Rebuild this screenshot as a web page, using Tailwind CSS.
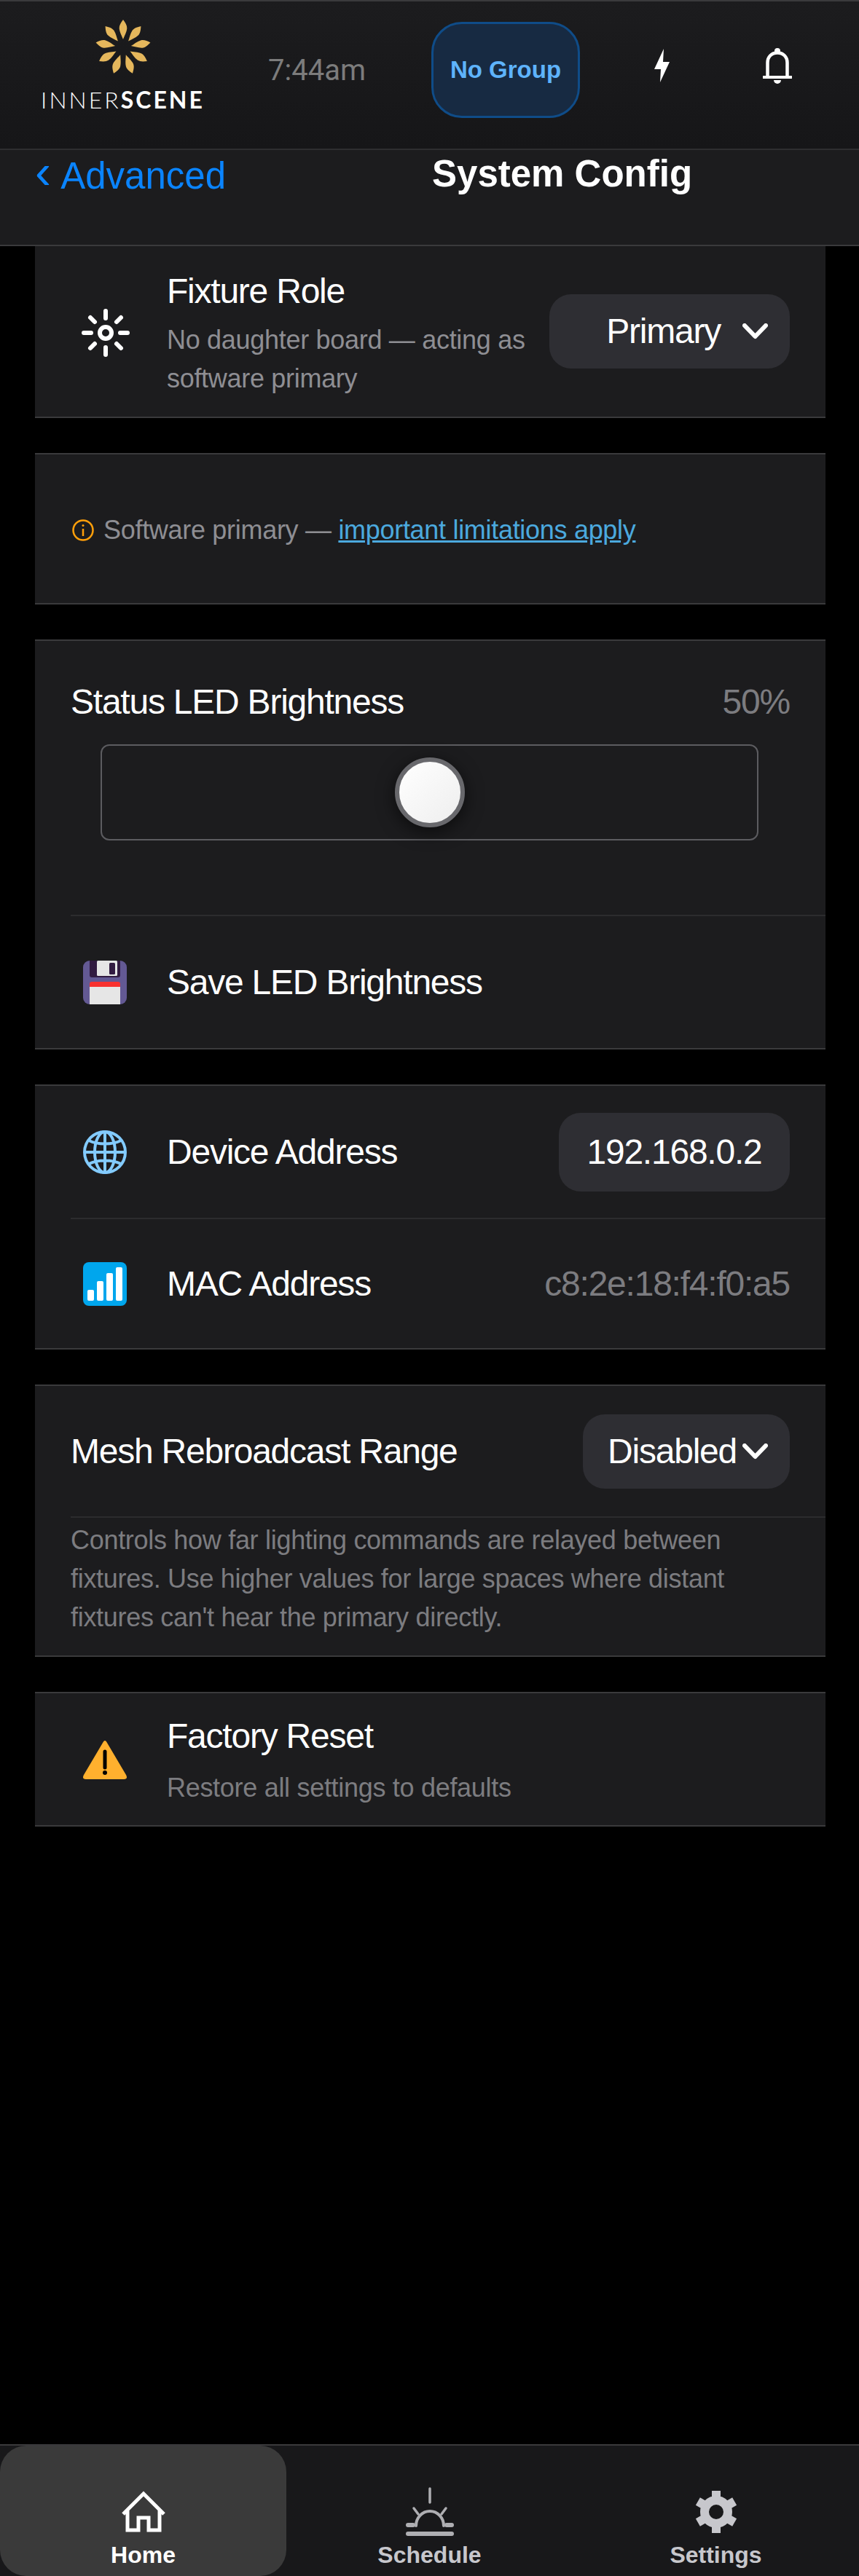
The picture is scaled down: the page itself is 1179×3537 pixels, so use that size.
<!doctype html>
<html lang="en">
<head>
  <meta charset="UTF-8" />
  <script src="https://cdn.jsdelivr.net/npm/@tailwindcss/browser@4"></script>
  <title>System Config</title>
</head>
<body class="h-[3537px] bg-black flex flex-col font-['Liberation_Sans',Arial,sans-serif] text-white overflow-hidden">
  <!-- Top bar -->
  <header class="h-[206px] shrink-0 flex items-start border-t-2 border-b-2 border-t-[#3a3a3c] border-b-[#2e2e30] bg-gradient-to-b from-[#1c1c1e] to-[#161618]">
    <div class="ml-[59px] w-[219px] mt-[25px] flex flex-col items-center">
      <svg class="w-[76px] h-[76px]" viewBox="-38 -38 76 76" fill="#e5b75c">
        <defs><path id="petal" d="M0,-38 C3,-34 5.6,-30 5.3,-26 C4.8,-21 1.5,-15 0,-11 C-1.5,-15 -4.8,-21 -5.3,-26 C-5.6,-30 -3,-34 0,-38Z" /></defs>
        <use href="#petal" />
        <use href="#petal" transform="rotate(40)" />
        <use href="#petal" transform="rotate(80)" />
        <use href="#petal" transform="rotate(120)" />
        <use href="#petal" transform="rotate(160)" />
        <use href="#petal" transform="rotate(200)" />
        <use href="#petal" transform="rotate(240)" />
        <use href="#petal" transform="rotate(280)" />
        <use href="#petal" transform="rotate(320)" />
      </svg>
      <div class="mt-[16px] font-['Lato',sans-serif] text-[32px] leading-[36px] tracking-[3px] whitespace-nowrap"><span class="font-light">INNER</span><span class="font-bold">SCENE</span></div>
    </div>
    <div class="ml-[90px] mt-[72px] w-[134px] font-['Roboto',sans-serif] text-[40px] leading-[46px] text-[#7c7c7c]">7:44am</div>
    <div class="ml-[90px] mt-[28px] w-[204px] h-[132px] flex items-center justify-center rounded-[42px] border-[3px] border-[#0f4c88] bg-[#172a42] text-[33px] font-bold text-[#5eb3fb]">No Group</div>
    <svg class="ml-[102px] mt-[65px] w-[21px] h-[46px]" viewBox="0 0 21 46" fill="#fff"><path d="M13 0 L0 28 L9 28 L8 46 L21 18 L12 18 Z" /></svg>
    <svg class="ml-[128px] mt-[64px] w-[40px] h-[49px]" viewBox="0 0 40 49" fill="none" stroke="#fff">
      <circle cx="20" cy="4" r="4" fill="#fff" stroke="none" />
      <path stroke-width="4.5" d="M6.5 38 V20 C6.5 12 12 6.5 20 6.5 C28 6.5 33.5 12 33.5 20 V38" />
      <path stroke-width="4" d="M1 40 H39" stroke-linecap="round" />
      <path fill="#fff" stroke="none" d="M15 44 H25 A5 5 0 0 1 15 44 Z" />
    </svg>
  </header>

  <!-- Page title bar -->
  <div class="h-[132px] shrink-0 flex items-start bg-[#1c1c1e] border-b-2 border-[#3a3a3c] pt-[4px] text-[51px] leading-[58px]">
    <div class="ml-[48px] -mt-[3px] w-[262px] flex items-baseline text-[#0a84ff]"><span class="text-[66px] leading-[58px] w-[36px]">‹</span><span>Advanced</span></div>
    <h1 class="ml-[283px] font-bold whitespace-nowrap">System Config</h1>
  </div>

  <main class="flex-1 min-h-0 ml-[48px] mr-[46px] flex flex-col gap-[48px]">
    <!-- Fixture role -->
    <section class="h-[236px] shrink-0 bg-[#1c1c1e] border-b-2 border-[#3a3a3c] pl-[64px] pr-[49px] flex items-center">
      <svg class="w-[66px] h-[66px] shrink-0 mt-[4px]" viewBox="0 0 66 66" fill="none" stroke="#fff" stroke-width="6" stroke-linecap="round">
        <circle cx="33" cy="33" r="8" />
        <path d="M33 3 V13 M33 53 V63 M3 33 H13 M53 33 H63 M12 12 L18 18 M54 12 L48 18 M12 54 L18 48 M54 54 L48 48" />
      </svg>
      <div class="ml-[51px] w-[510px] shrink-0 pt-[2px]">
        <div class="text-[48px] tracking-[-1.23px] leading-[68px]">Fixture Role</div>
        <div class="mt-[6px] text-[36px] tracking-[-0.3px] leading-[53px] text-[#8e8e93] whitespace-nowrap">No daughter board — acting as<br />software primary</div>
      </div>
      <div class="ml-auto w-[330px] h-[102px] shrink-0 rounded-[30px] bg-[#2e2e33] flex items-center justify-end pr-[30px] gap-[30px] text-[48px] tracking-[-1.23px]">
        Primary
        <svg class="w-[35px] h-[22px]" viewBox="0 0 35 22" fill="none" stroke="#fff" stroke-width="6" stroke-linecap="round" stroke-linejoin="round"><path d="M3 3 L17.5 18 L32 3" /></svg>
      </div>
    </section>

    <!-- Software primary note -->
    <section class="h-[208px] shrink-0 bg-[#1c1c1e] border-y-2 border-[#3a3a3c] pl-[51px] pt-[4px] flex items-center text-[36px] tracking-[-0.3px] text-[#8e8e93]">
      <svg class="w-[30px] h-[30px] shrink-0 mr-[13px]" viewBox="0 0 30 30" fill="none" stroke="#ff9f0a" stroke-width="2.5">
        <circle cx="15" cy="15" r="13.5" />
        <path d="M15 13 V23" />
        <circle cx="15" cy="8.5" r="1.5" fill="#ff9f0a" stroke="none" />
      </svg>
      <span class="whitespace-pre">Software primary — </span><a class="text-[#4ba9de] underline">important limitations apply</a>
    </section>

    <!-- LED brightness -->
    <section class="h-[563px] shrink-0 bg-[#1c1c1e] border-y-2 border-[#3a3a3c] flex flex-col">
      <div class="ml-[49px] pr-[49px] pt-[50px] flex justify-between text-[48px] tracking-[-1.23px] leading-[68px]">
        <span>Status LED Brightness</span>
        <span class="text-[#7c7c80]">50%</span>
      </div>
      <div class="mt-[24px] ml-[90px] w-[903px] h-[132px] rounded-[12px] border-2 border-[#5c5c60] flex items-center justify-center">
        <div class="w-[96px] h-[96px] rounded-full border-[6px] border-[#68686c] bg-gradient-to-br from-white to-[#eeeeee] shadow-[0_6px_24px_rgba(0,0,0,0.6)]"></div>
      </div>
      <div class="flex-1 mt-[102px] ml-[49px] border-t-2 border-[#2c2c2e] pl-[17px] flex items-center">
        <svg class="w-[60px] h-[60px] shrink-0" viewBox="0 0 60 60">
          <rect width="60" height="60" rx="9" fill="#635994" />
          <path d="M9 0 H51 V20 A3 3 0 0 1 48 23 H12 A3 3 0 0 1 9 20 Z" fill="#321b41" />
          <rect x="19" y="0" width="28" height="21" rx="1.5" fill="#e6e6e6" />
          <rect x="36" y="3" width="8" height="16" rx="1.5" fill="#321b41" />
          <path d="M9 36 V32 A3 3 0 0 1 12 29 H48 A3 3 0 0 1 51 32 V36 Z" fill="#f8312f" />
          <rect x="9" y="36" width="42" height="24" fill="#e6e6e6" />
        </svg>
        <span class="ml-[55px] text-[48px] tracking-[-1.23px]">Save LED Brightness</span>
      </div>
    </section>

    <!-- Addresses -->
    <section class="h-[364px] shrink-0 bg-[#1c1c1e] border-y-2 border-[#3a3a3c] flex flex-col">
      <div class="h-[181px] ml-[49px] pl-[17px] pr-[49px] flex items-center text-[48px] tracking-[-1.23px]">
        <svg class="w-[60px] h-[60px] shrink-0" viewBox="0 0 60 60" fill="none" stroke="#83cbff" stroke-width="4">
          <circle cx="30" cy="30" r="28" />
          <ellipse cx="30" cy="30" rx="14" ry="28" />
          <path d="M30 2 V58 M2 30 H58 M8 14 C20 20 40 20 52 14 M8 46 C20 40 40 40 52 46" />
        </svg>
        <span class="ml-[55px]">Device Address</span>
        <span class="ml-auto w-[317px] h-[108px] rounded-[30px] bg-[#2e2e33] flex items-center justify-center">192.168.0.2</span>
      </div>
      <div class="flex-1 ml-[49px] pl-[17px] pr-[49px] border-t-2 border-[#2c2c2e] flex items-center text-[48px] tracking-[-1.23px]">
        <svg class="w-[60px] h-[60px] shrink-0" viewBox="0 0 60 60" fill="#fff">
          <rect width="60" height="60" rx="8" fill="#00a6ed" />
          <rect x="6" y="38" width="9" height="15" rx="2" />
          <rect x="19" y="26" width="9" height="27" rx="2" />
          <rect x="32" y="15" width="9" height="38" rx="2" />
          <rect x="45" y="7" width="9" height="46" rx="2" />
        </svg>
        <span class="ml-[55px]">MAC Address</span>
        <span class="ml-auto text-[#7c7c80]">c8:2e:18:f4:f0:a5</span>
      </div>
    </section>

    <!-- Mesh range -->
    <section class="h-[374px] shrink-0 bg-[#1c1c1e] border-y-2 border-[#3a3a3c] flex flex-col">
      <div class="h-[179px] ml-[49px] pr-[49px] flex items-center text-[48px] tracking-[-1.23px]">
        <span>Mesh Rebroadcast Range</span>
        <div class="ml-auto w-[284px] h-[102px] rounded-[30px] bg-[#2e2e33] flex items-center justify-end pr-[30px] gap-[8px]">
          Disabled
          <svg class="w-[35px] h-[22px]" viewBox="0 0 35 22" fill="none" stroke="#fff" stroke-width="6" stroke-linecap="round" stroke-linejoin="round"><path d="M3 3 L17.5 18 L32 3" /></svg>
        </div>
      </div>
      <p class="ml-[49px] pt-[4px] border-t-2 border-[#2c2c2e] pr-[49px] text-[36px] tracking-[-0.3px] leading-[53px] text-[#7c7c80]">Controls how far lighting commands are relayed between fixtures. Use higher values for large spaces where distant fixtures can't hear the primary directly.</p>
    </section>

    <!-- Factory reset -->
    <section class="h-[185px] shrink-0 bg-[#1c1c1e] border-y-2 border-[#3a3a3c] pl-[66px] flex items-center">
      <svg class="w-[60px] h-[53px] shrink-0 mt-[2px]" viewBox="0 0 60 53">
        <path d="M30 0 C31 0 32 1 33 3 L59 47 C61 51 60 53 56 53 H4 C0 53 -1 51 1 47 L27 3 C28 1 29 0 30 0 Z" fill="#ffb02e" />
        <path d="M30 15 V37" stroke="#000" stroke-width="5" stroke-linecap="round" />
        <circle cx="30" cy="44" r="3" fill="#000" />
      </svg>
      <div class="ml-[55px]">
        <div class="text-[48px] tracking-[-1.23px] leading-[68px]">Factory Reset</div>
        <div class="text-[36px] tracking-[-0.3px] leading-[53px] text-[#7c7c80] mt-[10px]">Restore all settings to defaults</div>
      </div>
    </section>
  </main>

  <!-- Bottom nav -->
  <nav class="h-[181px] shrink-0 border-t-2 border-[#3a3a3c] bg-[#18181a] grid grid-cols-3 text-[32px] leading-[36px] font-bold text-[#c7c7cc]">
    <a class="rounded-[36px] bg-[#3a3a3a] pt-[57px] flex flex-col items-center text-white">
      <div class="h-[67px] flex items-center">
        <svg class="w-[60px] h-[57px]" viewBox="0 0 60 57" fill="none" stroke="#fff" stroke-width="5"><path d="M2 32 L30 4 L58 32 M8 26 V54 H23 V37 H37 V54 H52 V26" /></svg>
      </div>
      <span class="mt-[8px]">Home</span>
    </a>
    <a class="pt-[57px] flex flex-col items-center">
      <svg class="w-[66px] h-[67px]" viewBox="0 0 66 67" fill="none" stroke="#aeaeb2" stroke-linecap="round">
        <path stroke-width="3.5" d="M33 2 V21 M11 29 L17 37 M55 29 L49 37" />
        <path stroke-width="4" d="M14 53 A19 20 0 0 1 52 53" />
        <path stroke-width="6" d="M3 52 H10 M56 52 H63" />
        <path stroke-width="6" d="M3 64 H63" />
      </svg>
      <span class="mt-[8px]">Schedule</span>
    </a>
    <a class="pt-[57px] flex flex-col items-center">
      <div class="h-[67px] flex items-center">
        <svg class="w-[58px] h-[58px]" viewBox="-29 -29 58 58" fill="#c7c7cc">
          <circle r="16" fill="none" stroke="#c7c7cc" stroke-width="12" />
          <rect x="-6" y="-29" width="12" height="10" />
          <rect x="-6" y="-29" width="12" height="10" transform="rotate(60)" />
          <rect x="-6" y="-29" width="12" height="10" transform="rotate(120)" />
          <rect x="-6" y="-29" width="12" height="10" transform="rotate(180)" />
          <rect x="-6" y="-29" width="12" height="10" transform="rotate(240)" />
          <rect x="-6" y="-29" width="12" height="10" transform="rotate(300)" />
        </svg>
      </div>
      <span class="mt-[8px]">Settings</span>
    </a>
  </nav>
</body>
</html>
